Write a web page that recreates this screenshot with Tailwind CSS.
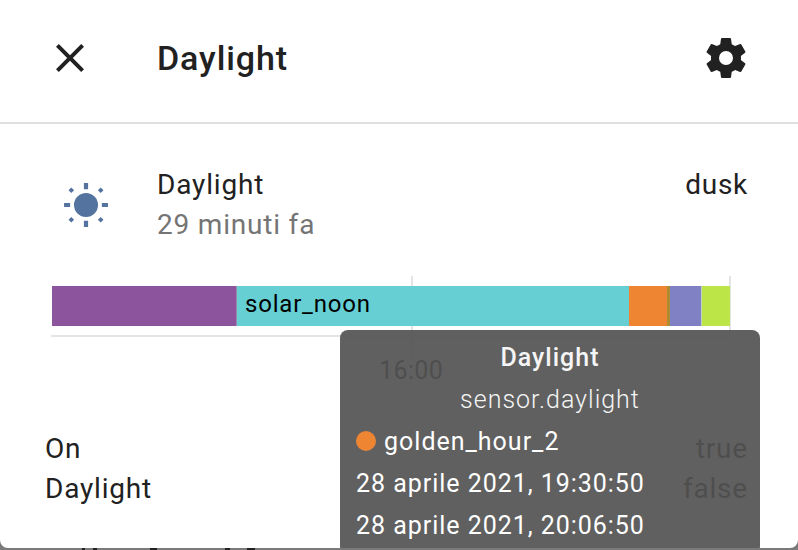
<!DOCTYPE html>
<html lang="en">
<head>
  <meta charset="UTF-8" />
  <meta name="viewport" content="width=device-width, initial-scale=1" />
  <title>Daylight</title>
  <script src="https://cdn.jsdelivr.net/npm/@tailwindcss/browser@4"></script>
</head>
<body class="w-[798px] h-[550px] overflow-hidden bg-[#7a7a7a] font-['Roboto',sans-serif] text-[#212121]">
  <div class="relative w-[798px] h-[548px] bg-white rounded-b-[8px] overflow-hidden">
    <!-- header -->
    <header class="flex items-center h-[124px] pl-[46px] pr-[48px] pb-[6px] border-b-2 border-[#e0e0e0]">
      <svg class="w-[48px] h-[48px] shrink-0 mr-[63px]" viewBox="0 0 24 24" fill="#212121"><path d="M19 6.41 17.59 5 12 10.59 6.41 5 5 6.41 10.59 12 5 17.59 6.41 19 12 13.41 17.59 19 19 17.59 13.41 12z"/></svg>
      <h1 class="flex-1 text-[34px] leading-[40px] font-medium tracking-[0.9px]">Daylight</h1>
      <svg class="w-[48px] h-[48px] shrink-0" viewBox="0 0 24 24" fill="#212121"><path d="M12 15.5A3.5 3.5 0 0 1 8.5 12 3.5 3.5 0 0 1 12 8.5a3.5 3.5 0 0 1 3.5 3.5 3.5 3.5 0 0 1-3.5 3.5m7.43-2.53c.04-.32.07-.64.07-.97 0-.33-.03-.66-.07-1l2.11-1.63c.19-.15.24-.42.12-.64l-2-3.46c-.12-.22-.39-.31-.61-.22l-2.49 1c-.52-.39-1.06-.73-1.69-.98l-.37-2.65A.506.506 0 0 0 14 2h-4c-.25 0-.46.18-.5.42l-.37 2.65c-.63.25-1.17.59-1.69.98l-2.49-1c-.22-.09-.49 0-.61.22l-2 3.46c-.13.22-.07.49.12.64L4.57 11c-.04.34-.07.67-.07 1 0 .33.03.65.07.97l-2.11 1.66c-.19.15-.25.42-.12.64l2 3.46c.12.22.39.3.61.22l2.49-1.01c.52.4 1.06.74 1.69.99l.37 2.65c.04.24.25.42.5.42h4c.25 0 .46-.18.5-.42l.37-2.65c.63-.26 1.17-.59 1.69-.99l2.49 1.01c.22.08.49 0 .61-.22l2-3.46c.12-.22.07-.49-.12-.64z"/></svg>
    </header>

    <!-- state row -->
    <section class="flex items-start h-[152px] pt-[41px] pl-[58px] pr-[50px]">
      <svg class="w-[56px] h-[56px] shrink-0 mr-[43px] mt-[12px]" viewBox="0 0 24 24" fill="#54739e"><circle cx="12" cy="12" r="5.15"/><path d="M11.1 2.6h1.8v2.6h-1.8zM11.1 18.8h1.8v2.6h-1.8zM2.6 11.1h2.6v1.8H2.6zM18.8 11.1h2.6v1.8h-2.6zM5.7 4.5l1.2 1.2-1.2 1.2-1.2-1.2zM18.3 4.5l1.2 1.2-1.2 1.2-1.2-1.2zM5.7 17.1l1.2 1.2-1.2 1.2-1.2-1.2zM18.3 17.1l1.2 1.2-1.2 1.2-1.2-1.2z"/></svg>
      <div class="flex-1">
        <div class="text-[28px] leading-[40px] tracking-[0.85px]">Daylight</div>
        <div class="text-[28px] leading-[40px] tracking-[0.8px] text-[#757575]">29 minuti fa</div>
      </div>
      <div class="text-[28px] leading-[40px] tracking-[0.7px]">dusk</div>
    </section>

    <!-- timeline chart -->
    <section class="relative h-[272px] pt-[10px]">
      <div class="absolute left-[411px] top-0 w-[2px] h-[80px] bg-[#e4e4e4]"></div>
      <div class="absolute left-[729px] top-0 w-[2px] h-[60px] bg-[#e4e4e4]"></div>
      <div class="absolute left-[51px] top-[59px] w-[680px] h-[2px] bg-[#e4e4e4]"></div>
      <div class="relative ml-[52px] w-[678px] flex h-[40px] text-[24px] leading-[36px] tracking-[0.8px] text-black">
        <div class="w-[185px] bg-[#8c549c] border-r border-[#9a8ab0]"></div>
        <div class="w-[392px] bg-[#65cfd4] pl-[8px]">solar_noon</div>
        <div class="w-[38px] bg-[#ee8533]"></div>
        <div class="w-[3px] bg-[#ad8c32]"></div>
        <div class="w-[32px] bg-[#7f81c4] border-r border-[#c0d0c0]"></div>
        <div class="w-[28px] bg-[#bce648]"></div>
      </div>
      <div class="absolute left-[379px] top-[79px] text-[25px] leading-[32px] tracking-[0.4px]">16:00</div>
      <div class="absolute left-[45px] top-[153px] text-[28px] leading-[40px] tracking-[0.8px]">
        <div>On</div>
        <div>Daylight</div>
      </div>
      <div class="absolute right-[50px] top-[153px] text-right text-[28px] leading-[40px] tracking-[0.8px]">
        <div>true</div>
        <div>false</div>
      </div>
    </section>

    <!-- tooltip -->
    <div class="absolute left-[340px] top-[330px] w-[420px] h-[224px] rounded-[8px] bg-[#525252]/92 text-white pt-[10px] px-[16px]">
      <div class="text-center text-[25px] leading-[36px] font-medium tracking-[1px] text-[#f5f5f5]">Daylight</div>
      <div class="text-center text-[25px] leading-[48px] font-light tracking-[1px] text-[#f5f5f5]">sensor.daylight</div>
      <div class="flex items-center text-[25px] leading-[36px] tracking-[1px]">
        <span class="w-[20px] h-[20px] rounded-full bg-[#ee8533] mr-[8px] -mt-[2px]"></span>
        <span>golden_hour_2</span>
      </div>
      <div class="text-[25px] leading-[42px] tracking-[0.96px] mt-[3px]">28 aprile 2021, 19:30:50</div>
      <div class="text-[25px] leading-[42px] tracking-[0.96px]">28 aprile 2021, 20:06:50</div>
    </div>
  </div>
  <!-- tops of the text behind the dialog -->
  <div class="flex h-[2px] pl-[82px]">
    <span class="w-[3px] bg-[#222]"></span>
    <span class="w-[4px] ml-[8px] bg-[#222]"></span>
    <span class="w-[7px] ml-[53px] bg-[#222]"></span>
    <span class="w-[5px] ml-[68px] bg-[#222]"></span>
    <span class="w-[8px] ml-[17px] bg-[#222]"></span>
  </div>
</body>
</html>
